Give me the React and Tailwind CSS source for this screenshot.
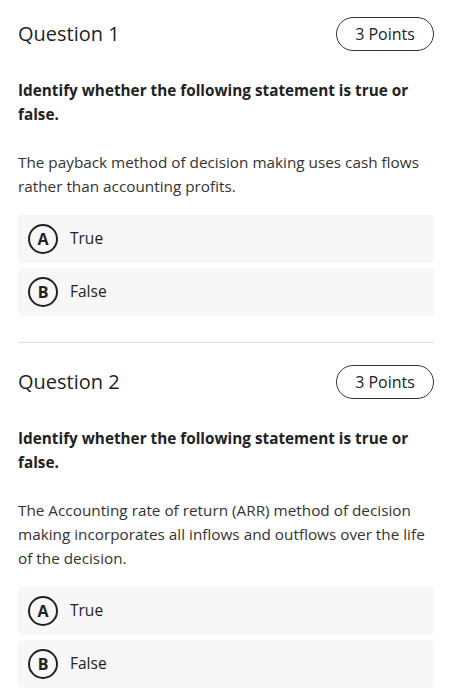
import React from 'react';

const questions = [
  {
    title: 'Question 1',
    points: '3 Points',
    prompt: 'Identify whether the following statement is true or false.',
    statement: 'The payback method of decision making uses cash flows rather than accounting profits.',
  },
  {
    title: 'Question 2',
    points: '3 Points',
    prompt: 'Identify whether the following statement is true or false.',
    statement:
      'The Accounting rate of return (ARR) method of decision making incorporates all inflows and outflows over the life of the decision.',
  },
];

function Option({ letter, label }) {
  return (
    <div className="flex h-12 items-center rounded-sm bg-[#f7f7f7] pl-[10px]">
      <div className="flex h-[30px] w-[30px] items-center justify-center rounded-full border-2 border-[#222] text-[16px] font-bold text-[#222]">
        {letter}
      </div>
      <span className="ml-[12px] text-[15.5px] text-[#222]">{label}</span>
    </div>
  );
}

function Question({ q }) {
  return (
    <div>
      <div className="flex h-[34px] items-center justify-between">
        <h2 className="text-[20px] text-[#1f1f1f]">{q.title}</h2>
        <div className="flex h-[34px] w-[98px] items-center justify-center rounded-full border-[1.5px] border-[#333] text-[16px] text-[#222]">
          {q.points}
        </div>
      </div>
      <p className="mt-[27px] pr-4 text-[15.3px] font-bold leading-6 text-[#222]">{q.prompt}</p>
      <p className="mt-6 text-[15.3px] leading-6 text-[#333]">{q.statement}</p>
      <div className="mt-[17px] flex flex-col gap-[5px]">
        <Option letter="A" label="True" />
        <Option letter="B" label="False" />
      </div>
    </div>
  );
}

export default function App() {
  return (
    <div className="min-h-screen bg-white px-[18px] pt-[17px] font-['Open_Sans',sans-serif]">
      <Question q={questions[0]} />
      <div className="mt-[26px] h-px bg-[#dcdcdc]" />
      <div className="mt-[22px]">
        <Question q={questions[1]} />
      </div>
    </div>
  );
}
